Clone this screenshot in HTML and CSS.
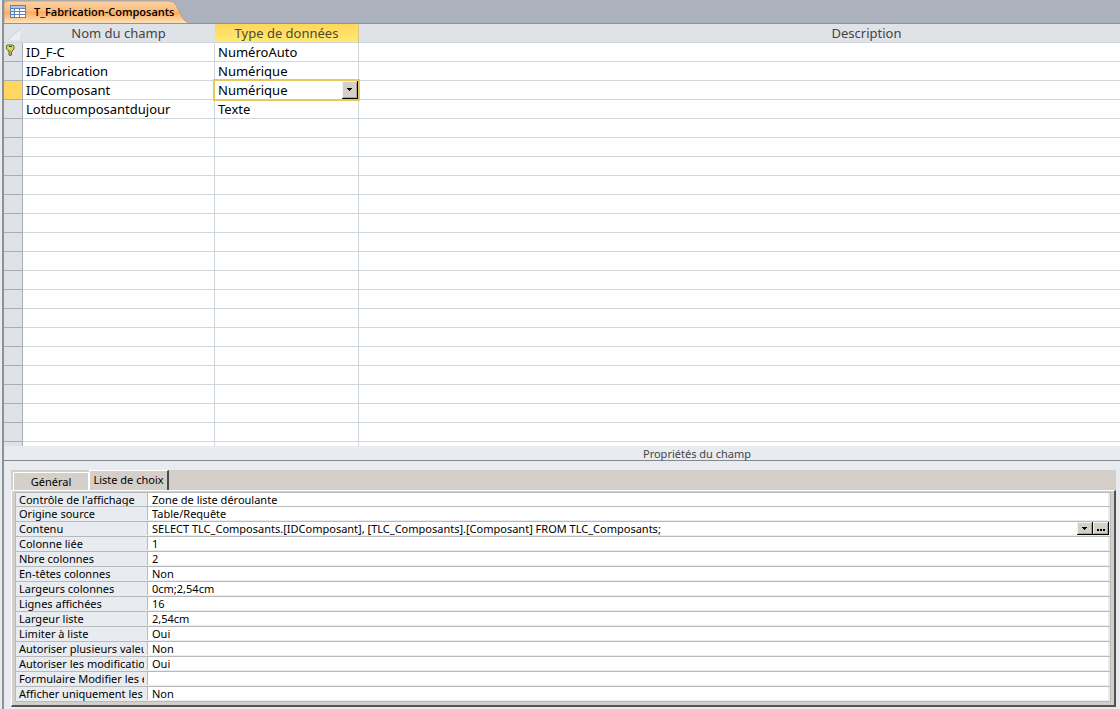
FILE: index.html
```html
<!DOCTYPE html>
<html lang="fr">
<head>
<meta charset="utf-8">
<title>T_Fabrication-Composants</title>
<link rel="stylesheet" href="styles.css">
</head>
<body>
<main class="window">
  <nav class="doc-tabs">
    <button class="doc-tab" type="button">
      <svg class="tab-shape" width="185" height="23" viewBox="0 0 185 23" aria-hidden="true">
        <defs>
          <linearGradient id="tabFill" x1="0" y1="0" x2="0" y2="1">
            <stop offset="0" stop-color="#fbd3a5"/>
            <stop offset=".46" stop-color="#fcbc7c"/>
            <stop offset=".5" stop-color="#fba958"/>
            <stop offset="1" stop-color="#fde2bd"/>
          </linearGradient>
        </defs>
        <path d="M0 23V4Q0 1 4 1H165Q170 1 172 5L178 17Q181 22 185 23Z" fill="url(#tabFill)"/>
        <path d="M0 23V4Q0 1 4 1H165Q170 1 172 5L178 17Q181 22 185 23" fill="none" stroke="#b5a38e"/>
      </svg>
      <svg class="tab-icon" width="16" height="13" viewBox="0 0 16 13" aria-hidden="true">
        <path d="M0 0H16V13H0Z" fill="#5f83b5"/>
        <path d="M1 1H15V3H1Z" fill="#a9c4ea"/>
        <path d="M1 4H4V6H1ZM1 7H4V9H1ZM1 10H4V12H1Z" fill="#dce8f8"/>
        <path d="M5 4H9V6H5ZM10 4H15V6H10ZM5 7H9V9H5ZM10 7H15V9H10ZM5 10H9V12H5ZM10 10H15V12H10Z" fill="#fff"/>
      </svg>
      <span class="tab-title">T_Fabrication-Composants</span>
    </button>
  </nav>

  <section class="fields">
    <table class="field-table">
      <colgroup><col class="col-select"><col class="col-name"><col class="col-type"><col></colgroup>
      <thead>
        <tr>
          <th class="corner"><svg width="12" height="11" viewBox="0 0 12 11" aria-hidden="true"><path d="M12 0V11H0Z" fill="#eceef2"/><path d="M0 11L12 0" stroke="#c9cdd5"/></svg></th>
          <th>Nom du champ</th><th class="active">Type de données</th><th class="description">Description</th>
        </tr>
      </thead>
      <tbody>
        <tr><th class="key"><svg width="9" height="12" viewBox="0 0 9 12" aria-label="Clé primaire"><path d="M1 1H7L8 2V5L6 7V8L5 9L6 10L5 11.5H3.500L3 11V7L.5 5V2Z" fill="#d8d75a" stroke="#65672b"/><path d="M3 2H6V3H3Z" fill="#4d5021"/><path d="M4 6V11" stroke="#8b8b37"/></svg></th><td>ID_F-C</td><td>NuméroAuto</td><td></td></tr>
        <tr><th></th><td>IDFabrication</td><td>Numérique</td><td></td></tr>
        <tr><th class="current"></th><td>IDComposant</td><td class="editing">
          <div class="type-box">
            <select class="type-select" aria-label="Type de données"><option>Numérique</option><option>Texte</option><option>NuméroAuto</option></select>
            <span class="classic-button type-arrow"><svg width="5" height="3" viewBox="0 0 5 3" aria-hidden="true"><path d="M0 0H5V1H4V2H3V3H2V2H1V1H0Z"/></svg></span>
          </div></td><td></td></tr>
        <tr><th></th><td>Lotducomposantdujour</td><td>Texte</td><td></td></tr>
        <tr><th></th><td></td><td></td><td></td></tr>
        <tr><th></th><td></td><td></td><td></td></tr>
        <tr><th></th><td></td><td></td><td></td></tr>
        <tr><th></th><td></td><td></td><td></td></tr>
        <tr><th></th><td></td><td></td><td></td></tr>
        <tr><th></th><td></td><td></td><td></td></tr>
        <tr><th></th><td></td><td></td><td></td></tr>
        <tr><th></th><td></td><td></td><td></td></tr>
        <tr><th></th><td></td><td></td><td></td></tr>
        <tr><th></th><td></td><td></td><td></td></tr>
        <tr><th></th><td></td><td></td><td></td></tr>
        <tr><th></th><td></td><td></td><td></td></tr>
        <tr><th></th><td></td><td></td><td></td></tr>
        <tr><th></th><td></td><td></td><td></td></tr>
        <tr><th></th><td></td><td></td><td></td></tr>
        <tr><th></th><td></td><td></td><td></td></tr>
        <tr><th></th><td></td><td></td><td></td></tr>
        <tr class="partial"><th></th><td></td><td></td><td></td></tr>
      </tbody>
    </table>
  </section>

  <h2 class="divider">Propriétés du champ</h2>

  <section class="properties">
    <div class="prop-tabs">
      <button class="prop-tab" type="button">Général</button>
      <button class="prop-tab selected" type="button">Liste de choix</button>
    </div>
    <div class="prop-frame">
      <div class="prop-list">
        <div class="prop"><label for="p1">Contrôle de l'affichage</label><input id="p1" value="Zone de liste déroulante"></div>
        <div class="prop"><label for="p2">Origine source</label><input id="p2" value="Table/Requête"></div>
        <div class="prop with-buttons"><label for="p3">Contenu</label><input id="p3" value="SELECT TLC_Composants.[IDComposant], [TLC_Composants].[Composant] FROM TLC_Composants;">
          <button class="classic-button" type="button" aria-label="Ouvrir la liste"><svg width="5" height="3" viewBox="0 0 5 3" aria-hidden="true"><path d="M0 0H5V1H4V2H3V3H2V2H1V1H0Z"/></svg></button>
          <button class="classic-button" type="button" aria-label="Générer"><svg width="8" height="6" viewBox="0 0 8 6" aria-hidden="true"><path d="M0 4H2V6H0ZM3 4H5V6H3ZM6 4H8V6H6Z"/></svg></button></div>
        <div class="prop"><label for="p4">Colonne liée</label><input id="p4" value="1"></div>
        <div class="prop"><label for="p5">Nbre colonnes</label><input id="p5" value="2"></div>
        <div class="prop"><label for="p6">En-têtes colonnes</label><input id="p6" value="Non"></div>
        <div class="prop"><label for="p7">Largeurs colonnes</label><input id="p7" value="0cm;2,54cm"></div>
        <div class="prop"><label for="p8">Lignes affichées</label><input id="p8" value="16"></div>
        <div class="prop"><label for="p9">Largeur liste</label><input id="p9" value="2,54cm"></div>
        <div class="prop"><label for="p10">Limiter à liste</label><input id="p10" value="Oui"></div>
        <div class="prop"><label for="p11">Autoriser plusieurs valeurs</label><input id="p11" value="Non"></div>
        <div class="prop"><label for="p12">Autoriser les modifications</label><input id="p12" value="Oui"></div>
        <div class="prop"><label for="p13">Formulaire Modifier les éléments</label><input id="p13" value=""></div>
        <div class="prop"><label for="p14">Afficher uniquement les valeurs</label><input id="p14" value="Non"></div>
      </div>
    </div>
  </section>
</main>
</body>
</html>
```
FILE: styles.css
```css
* { box-sizing: border-box; }

body {
  margin: 0;
  background: #e8ecf1;
  color: #000;
  font-family: "Noto Sans", "Open Sans", sans-serif;
  font-size: 13px;
}

button, input, select { font: inherit; color: inherit; }

.window {
  min-height: 100vh;
  margin-left: 2px;
  border-left: 2px solid #8e9196;
}

/* Document tabs */
.doc-tabs {
  display: flex;
  height: 24px;
  background: #abb2be;
  border-bottom: 1px solid #8d929c;
}
.doc-tab {
  position: relative;
  display: flex;
  align-items: center;
  gap: 8px;
  width: 185px;
  height: 23px;
  padding: 0 0 0 6px;
  border: 0;
  background: none;
  font-family: "Open Sans", "Noto Sans", sans-serif;
  font-size: 11px;
  font-weight: 600;
  white-space: nowrap;
}
.tab-shape { position: absolute; left: 0; top: 0; }
.tab-icon, .tab-title { position: relative; }

/* Field grid */
.fields { background: #fff; }
.field-table {
  width: 100%;
  table-layout: fixed;
  border-collapse: separate;
  border-spacing: 0;
}
.col-select { width: 19px; }
.col-name { width: 192px; }
.col-type { width: 144px; }
.field-table tr { height: 19px; }
.field-table th, .field-table td {
  height: 19px;
  padding: 0 3px;
  border-right: 1px solid #d0d4dc;
  border-bottom: 1px solid #d0d7dd;
  line-height: 18px;
  text-align: left;
  font-weight: 400;
  white-space: nowrap;
}
.field-table th:last-child, .field-table td:last-child { border-right: 0; }
.field-table tbody th {
  padding: 0;
  background: #dfe2e7;
  border-right-color: #a7adb7;
  border-bottom-color: #a7adb7;
}
.field-table thead th {
  background: #dfe2e7;
  border-right-color: #dfe2e7;
  color: #444;
  text-align: center;
}
.field-table thead .active {
  background: linear-gradient(#ffd65c, #ffea72);
  border-right-color: #d5c68c;
  color: #514a28;
}
.field-table thead .description { padding: 0 0 0 254px; }
.field-table .corner { padding: 0; }
.corner svg, .key svg { display: block; }
.corner svg { margin: 3px 0 0 4px; }
.key svg { margin: 0 0 5px 2px; }
.field-table tbody .current { background: #ffd65f; }
.field-table .partial, .field-table .partial th, .field-table .partial td {
  height: 4px;
  border-bottom: 0;
  line-height: 4px;
}
.field-table .editing { padding: 0; position: relative; }
.type-box {
  position: absolute;
  inset: -2px;
  display: flex;
  border: 2px solid #e5c95a;
  background: #fff;
}
.type-select {
  flex: 1;
  min-width: 0;
  padding: 0 0 0 3px;
  border: 0;
  border-radius: 0;
  appearance: none;
  background: none;
  line-height: 18px;
}
.type-arrow {
  position: absolute;
  right: 0;
  top: 0;
  pointer-events: none;
}
.classic-button {
  display: flex;
  align-items: center;
  justify-content: center;
  flex: none;
  width: 16px;
  height: 13px;
  padding: 0;
  border: solid #000;
  border-width: 0 1px 1px 0;
  border-radius: 0;
  background: #d4d0c8;
  box-shadow: inset 1px 1px #f4f2ee, inset -1px -1px #aaa69e;
}
.type-box .classic-button { height: 18px; }

/* Splitter */
.divider {
  height: 15px;
  margin: 0 0 9px;
  padding-left: 270px;
  border-bottom: 1px solid #85898f;
  color: #444;
  font-size: 11px;
  font-weight: 400;
  line-height: 16px;
  text-align: center;
}

/* Property sheet */
.properties {
  margin: 0 4px 3px 7px;
  background: #d4cfc8;
  font-size: 11px;
}
.prop-tabs {
  display: flex;
  align-items: flex-end;
  height: 20px;
  padding-left: 2px;
}
.prop-tab {
  width: 76px;
  height: 18px;
  padding: 0;
  border: 1px solid #fff;
  border-bottom: 0;
  background: #d4cfc8;
  line-height: 18px;
  white-space: nowrap;
}
.prop-tab.selected {
  width: 80px;
  height: 20px;
  padding-bottom: 2px;
  border-right: 2px solid #4c4a46;
}
.prop-frame {
  padding: 1px 3px 3px 3px;
  border: solid #fff;
  border-width: 1px 0 0 1px;
  border-right: 2px solid #55534f;
  border-bottom: 2px solid #55534f;
}
.prop-list {
  border: solid #b9babc;
  border-width: 0 1px;
  background: #e8ecf1;
}
.prop {
  display: flex;
  height: 15px;
  padding-right: 2px;
  border-bottom: 1px solid #b9babc;
}
.prop:first-child { border-top: 1px solid #b9babc; }
.prop.with-buttons { padding-right: 1px; }
.prop label {
  width: 128px;
  padding-left: 3px;
  overflow: hidden;
  line-height: 14px;
  white-space: nowrap;
}
.prop input {
  flex: 1;
  min-width: 0;
  height: 13px;
  margin-left: 3px;
  padding: 0 0 0 4px;
  border: 0;
  border-left: 1px solid #b9babc;
  border-radius: 0;
  background: #fff;
  line-height: 13px;
}
```
